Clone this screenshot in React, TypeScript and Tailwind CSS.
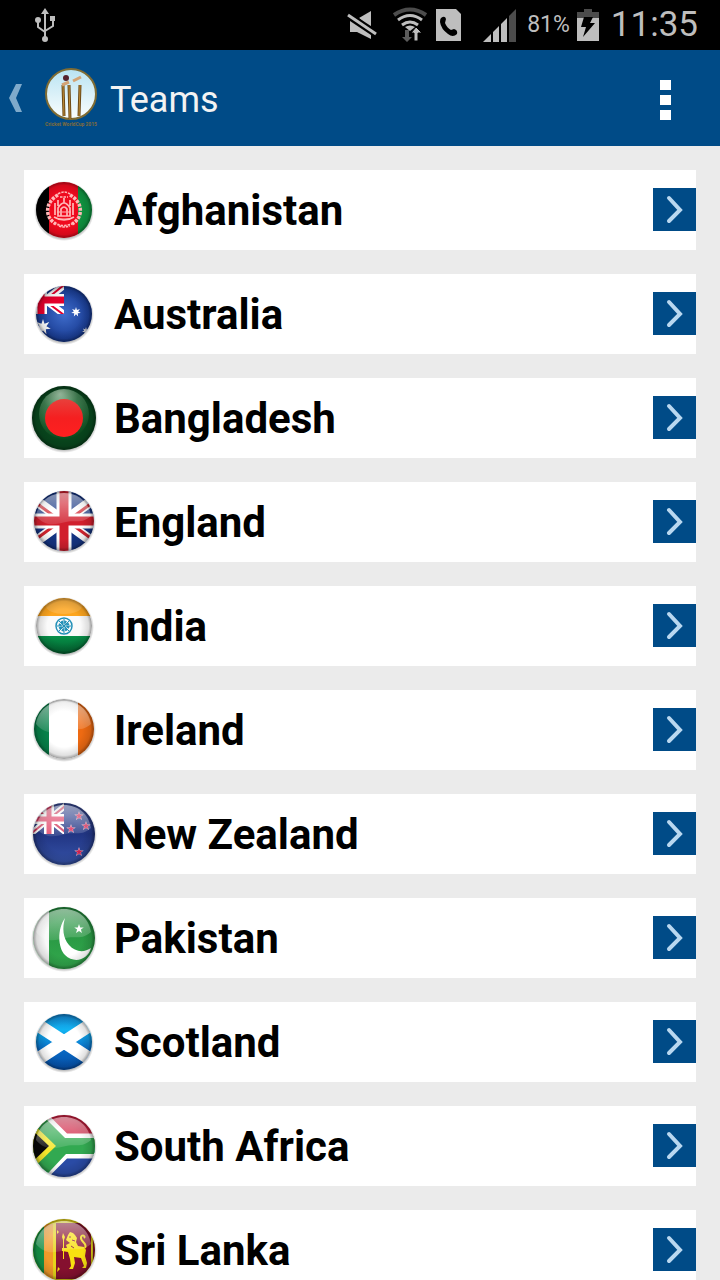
import type { ReactNode } from "react";

const STAR_7 = "0,-10 1.9,-4 7.8,-6.2 4.3,-1 9.7,2.2 3.5,2.7 4.3,9 0,4.4 -4.3,9 -3.5,2.7 -9.7,2.2 -4.3,-1 -7.8,-6.2 -1.9,-4";
const STAR_5 = "0,-10 2.4,-3.2 9.5,-3.1 3.8,1.2 5.9,8.1 0,4 -5.9,8.1 -3.8,1.2 -9.5,-3.1 -2.4,-3.2";

function Star({ x, y, r, points = STAR_5, fill = "#fff" }: { x: number; y: number; r: number; points?: string; fill?: string }) {
  return <polygon points={points} fill={fill} transform={`translate(${x} ${y}) scale(${r / 10})`} />;
}

/** Round glass badge: clips the flag to a circle, then adds rim shade and gloss. */
function FlagBadge({ id, cy = 40, r, gloss, children }: { id: string; cy?: number; r: number; gloss?: boolean; children: ReactNode }) {
  return (
    <svg viewBox="0 0 80 80" className="size-20 shrink-0" aria-hidden="true">
      <defs>
        <clipPath id={`${id}-clip`}>
          <circle cx="40" cy={cy} r={r} />
        </clipPath>
        <radialGradient id={`${id}-shade`}>
          <stop offset="0.6" stopColor="#000" stopOpacity="0" />
          <stop offset="0.88" stopColor="#000" stopOpacity="0.12" />
          <stop offset="1" stopColor="#000" stopOpacity="0.4" />
        </radialGradient>
        <linearGradient id={`${id}-gloss`} x1="0" y1="0" x2="0" y2="1">
          <stop offset="0" stopColor="#fff" stopOpacity="0.5" />
          <stop offset="1" stopColor="#fff" stopOpacity="0.12" />
        </linearGradient>
        <radialGradient id={`${id}-drop`}>
          <stop offset="0.88" stopColor="#000" stopOpacity="0.35" />
          <stop offset="1" stopColor="#000" stopOpacity="0" />
        </radialGradient>
      </defs>
      <circle cx="40" cy={cy + 1} r={r + 2} fill={`url(#${id}-drop)`} />
      <g clipPath={`url(#${id}-clip)`}>
        {children}
        <circle cx="40" cy={cy} r={r} fill={`url(#${id}-shade)`} />
        {gloss && <path d="M12 34 C14 20 26 11 40 11 C54 11 65 20 67 34 C58 42 52 38 42 40 C32 42 22 46 12 34Z" fill={`url(#${id}-gloss)`} />}
      </g>
    </svg>
  );
}

function Afghanistan() {
  return (
    <FlagBadge id="af" r={28}>
      <rect width="25" height="80" fill="#000" />
      <rect x="25" width="30" height="80" fill="#f00a1e" />
      <rect x="54" width="26" height="80" fill="#0f9440" />
      <g fill="none" stroke="#ffb9b8">
        <path d="M34 25 C20 33 21 48 32 54 M46 25 C60 33 59 48 48 54" strokeWidth="3.5" strokeDasharray="3 1.2" />
        <path d="M34 24 Q40 20 46 24 M36 27 H44 M35 56 Q40 58 46 56 M30 53 Q40 58 50 53" strokeWidth="1.6" strokeDasharray="2.5 1" />
        <path d="M31 33 V45 M34 30 V36 M46 30 V36 M49 33 V45 M34 38 Q40 28 46 38 V46 H34Z M37 46 V39 Q40 35 43 39 V46 M40 28 V33 M30 47 Q40 53 50 47" strokeWidth="1.7" />
        <path d="M33 42 H36 M44 42 H47 M38 42 H42 M34 49 H46" strokeWidth="1.2" />
      </g>
    </FlagBadge>
  );
}

function Australia() {
  return (
    <FlagBadge id="au" r={28}>
      <defs>
        <radialGradient id="au-blue" cx="0.5" cy="0.5" r="0.42">
          <stop offset="0" stopColor="#3f6dcc" />
          <stop offset="1" stopColor="#0d2c80" />
        </radialGradient>
        <clipPath id="au-canton">
          <rect y="10" width="40" height="30" />
        </clipPath>
      </defs>
      <rect width="80" height="80" fill="url(#au-blue)" />
      <g clipPath="url(#au-canton)" fill="none">
        <path d="M-6 48 L44 8 M-2 8 L42 42" stroke="#fff" strokeWidth="7" />
        <path d="M20 27 L40 11 M20 26 L40 41" stroke="#e4002b" strokeWidth="2" />
        <path d="M17 10 V40 M0 26 H40" stroke="#fff" strokeWidth="12" />
        <path d="M17 10 V40 M0 26 H40" stroke="#e4002b" strokeWidth="7" />
      </g>
      <Star x={19} y={53} r={8} points={STAR_7} />
      <Star x={52} y={38} r={5} points={STAR_7} />
      <Star x={62} y={57} r={4} points={STAR_7} />
    </FlagBadge>
  );
}

function Bangladesh() {
  return (
    <FlagBadge id="bd" r={32}>
      <defs>
        <linearGradient id="bd-red" x1="0" y1="0" x2="0" y2="1">
          <stop offset="0" stopColor="#e8403c" />
          <stop offset="0.5" stopColor="#f51f20" />
          <stop offset="1" stopColor="#ff2020" />
        </linearGradient>
        <radialGradient id="bd-glass" cx="0.42" cy="0.1" r="0.9">
          <stop offset="0" stopColor="#9cc0a2" />
          <stop offset="0.4" stopColor="#3f7d50" />
          <stop offset="1" stopColor="#0a4a1c" />
        </radialGradient>
      </defs>
      <rect width="80" height="80" fill="#08471d" />
      <ellipse cx="40" cy="36" rx="25" ry="25" fill="url(#bd-glass)" />
      <circle cx="40" cy="40" r="19" fill="url(#bd-red)" />
    </FlagBadge>
  );
}

function England() {
  return (
    <FlagBadge id="en" cy={39} r={30} gloss>
      <rect width="80" height="80" fill="#143483" />
      <path d="M0 10 L80 68 M0 68 L80 10" stroke="#fff" strokeWidth="10" />
      <path d="M0 12 L38 40 M42 38 L80 66 M0 66 L38 38 M42 40 L80 12" stroke="#d3252f" strokeWidth="3" />
      <path d="M40 0 V80 M0 39 H80" stroke="#fff" strokeWidth="15" />
      <path d="M40 0 V80 M0 39 H80" stroke="#d11f2d" strokeWidth="9" />
    </FlagBadge>
  );
}

function India() {
  return (
    <FlagBadge id="in" r={28}>
      <defs>
        <linearGradient id="in-green" x1="0" y1="0" x2="0" y2="1">
          <stop offset="0" stopColor="#069048" />
          <stop offset="0.6" stopColor="#03602f" />
        </linearGradient>
      </defs>
      <rect width="80" height="31" fill="#fda51e" />
      <rect y="30" width="80" height="20" fill="#fafafa" />
      <rect y="50" width="80" height="30" fill="url(#in-green)" />
      <ellipse cx="40" cy="20" rx="18" ry="8" fill="#fff" opacity="0.15" />
      <g fill="none" stroke="#2390b8">
        <circle cx="40" cy="40" r="8" strokeWidth="1.5" />
        <circle cx="40" cy="40" r="4" strokeWidth="3" strokeDasharray="2 1.1" />
        <path d="M40 33 V47 M33 40 H47 M35 35 L45 45 M45 35 L35 45" strokeWidth="1" />
      </g>
    </FlagBadge>
  );
}

function Ireland() {
  return (
    <FlagBadge id="ie" cy={39} r={30} gloss>
      <rect width="26" height="80" fill="#078149" />
      <rect x="25" width="30" height="80" fill="#fff" />
      <rect x="54" width="26" height="80" fill="#ee6a12" />
    </FlagBadge>
  );
}

function NewZealand() {
  return (
    <FlagBadge id="nz" r={31} gloss>
      <defs>
        <linearGradient id="nz-blue" x1="0" y1="0" x2="0" y2="1">
          <stop offset="0" stopColor="#43549c" />
          <stop offset="0.5" stopColor="#213583" />
          <stop offset="1" stopColor="#3c5cb4" />
        </linearGradient>
        <clipPath id="nz-canton">
          <rect y="8" width="40" height="32" />
        </clipPath>
      </defs>
      <rect width="80" height="80" fill="url(#nz-blue)" />
      <g clipPath="url(#nz-canton)">
        <path d="M4 8 L46 42 M4 42 L46 8" stroke="#fff" strokeWidth="6" />
        <path d="M4 8 L46 42 M4 42 L46 8" stroke="#d33a5c" strokeWidth="2" />
        <path d="M25 8 V40 M0 25 H40" stroke="#fff" strokeWidth="10" />
        <path d="M25 8 V40 M0 25 H40" stroke="#e2466a" strokeWidth="5" />
      </g>
      {[
        [47, 35],
        [62, 32],
        [55, 22],
        [55, 58],
      ].map(([x, y]) => (
        <g key={`${x}-${y}`}>
          <Star x={x} y={y} r={5} fill="#e8cfe0" />
          <Star x={x} y={y} r={4} fill="#dc2456" />
        </g>
      ))}
    </FlagBadge>
  );
}

function Pakistan() {
  return (
    <FlagBadge id="pk" r={31} gloss>
      <defs>
        <linearGradient id="pk-green" x1="0" y1="0" x2="0" y2="1">
          <stop offset="0" stopColor="#20883b" />
          <stop offset="1" stopColor="#35ad4f" />
        </linearGradient>
      </defs>
      <rect width="80" height="80" fill="url(#pk-green)" />
      <rect width="25" height="80" fill="#f8f8f8" />
      <path d="M41 20 C33 31 34 50 41 57 C50 66 64 62 67 50 C60 55 51 54 45 47 C39 40 38 30 41 20Z" fill="#fff" />
      <Star x={55} y={31} r={5} />
    </FlagBadge>
  );
}

function Scotland() {
  return (
    <FlagBadge id="sc" r={28}>
      <defs>
        <linearGradient id="sc-blue" x1="0" y1="0" x2="0" y2="1">
          <stop offset="0.15" stopColor="#1180cc" />
          <stop offset="0.35" stopColor="#12b4f2" />
          <stop offset="0.6" stopColor="#0869c4" />
          <stop offset="1" stopColor="#043c93" />
        </linearGradient>
      </defs>
      <rect width="80" height="80" fill="url(#sc-blue)" />
      <path d="M0 14 L80 66 M0 66 L80 14" stroke="#fff" strokeWidth="13" />
    </FlagBadge>
  );
}

function SouthAfrica() {
  return (
    <FlagBadge id="za" r={31} gloss>
      <rect width="80" height="40" fill="#cf1f40" />
      <rect y="40" width="80" height="40" fill="#2a4ba5" />
      <path d="M12 0 L42 30 H90 V50 H42 L12 80" fill="#32a951" stroke="#fff" strokeWidth="5" />
      <path d="M0 0 H9 L41 32 H80 V48 H42 L12 80 H0Z" fill="#32a951" />
      <path d="M0 9 L32 40 L0 71Z" fill="#f5e72c" />
      <path d="M0 16 L25 40 L0 64Z" fill="#080808" />
    </FlagBadge>
  );
}

function SriLanka() {
  return (
    <FlagBadge id="lk" r={31} gloss>
      <rect width="80" height="80" fill="#e6d51a" />
      <rect y="14" width="20" height="56" fill="#159447" />
      <rect x="20" y="14" width="9" height="56" fill="#f19a2a" />
      <rect x="32" y="13" width="35" height="56" fill="#85102f" />
      <rect x="69" y="13" width="11" height="56" fill="#85102f" />
      <g fill="#f8df10">
        <path d="M44 25 L46 22 L49 23 L51 25 L53 28 L52 32 L54 36 L60 37 L62 40 L61 46 L63 53 L62 58 L58 58 L60 56 L57 48 L50 47 L51 53 L49 59 L45 59 L47 56 L46 49 L44 42 L38 41 V38 L43 38 L42 35 L46 33 L42 30Z" />
        <path d="M39 23 L41 27 L40 30 V49 H39 V30 L38 27Z" />
      </g>
      <path d="M61 38 C64 33 56 32 57 27 C58 24 62 26 60 28" fill="none" stroke="#f8df10" strokeWidth="2" />
      <path d="M33 20 l2 2 -2 2Z M33 62 l3 -3 -2 -2Z" fill="#f8df10" />
      <path d="M45 27 h2 M48 30 l3 1 M47 36 l3 2" stroke="#85102f" strokeWidth="1" />
    </FlagBadge>
  );
}

const TEAMS = [
  { name: "Afghanistan", Flag: Afghanistan },
  { name: "Australia", Flag: Australia },
  { name: "Bangladesh", Flag: Bangladesh },
  { name: "England", Flag: England },
  { name: "India", Flag: India },
  { name: "Ireland", Flag: Ireland },
  { name: "New Zealand", Flag: NewZealand },
  { name: "Pakistan", Flag: Pakistan },
  { name: "Scotland", Flag: Scotland },
  { name: "South Africa", Flag: SouthAfrica },
  { name: "Sri Lanka", Flag: SriLanka },
];

function StatusBar() {
  return (
    <div className="flex h-[50px] shrink-0 items-center justify-between bg-black pr-[22px] pl-[35px] text-[#bebebe]">
      <svg viewBox="0 0 21 34" className="h-[34px] w-[21px]" fill="none" stroke="currentColor" strokeWidth="2" aria-hidden="true">
        <path d="M10 4 V30 M3 13 V19 L10 24 M18 11 V18 L10 23" />
        <path d="M10 0 L14 6 H6Z M15 8 H20 V13 H15Z" fill="currentColor" stroke="none" />
        <circle cx="3" cy="12" r="3" fill="currentColor" stroke="none" />
        <circle cx="10" cy="31" r="3" fill="currentColor" stroke="none" />
      </svg>

      <div className="flex items-center">
        <svg viewBox="0 0 30 34" className="mr-[15px] h-[34px] w-[30px]" aria-hidden="true">
          <path d="M12 10 L24 3 V20Z" fill="currentColor" />
          <path d="M3 13 L24 27 V31 L10 24 H3Z" fill="currentColor" />
          <path d="M0 6 L29 25" stroke="#000" strokeWidth="6" />
          <path d="M1 7 L29 26" stroke="currentColor" strokeWidth="3" />
        </svg>
        <svg viewBox="0 0 36 36" className="mr-2 h-9 w-9" fill="none" strokeWidth="3" aria-hidden="true">
          <path d="M2 8 Q18 -3 34 8" stroke="#4c4c4c" strokeWidth="4" />
          <path d="M6 13 Q18 4 30 13 M10 18 Q18 12 26 18" stroke="currentColor" />
          <path d="M13 20 Q18 17 23 20 L18 24Z" fill="currentColor" />
          <path d="M13 23 H17 V30 H20 L15 35 L10 30 H13Z" fill="#5c5c5c" />
          <path d="M24 20 L30 26 H26 V34 H22 V26 H19Z" fill="currentColor" stroke="#000" strokeWidth="1" />
        </svg>
        <svg viewBox="0 0 25 32" className="mr-[22px] h-8 w-[25px]" aria-hidden="true">
          <path d="M0 0 H20 L25 5 V32 H0Z" fill="currentColor" />
          <path d="M5 9 Q9 6 10 10 L9 14 Q11 19 15 21 L18 20 Q22 21 21 25 Q17 29 12 25 Q5 20 4 13 Q4 10 5 9Z" fill="#000" />
        </svg>
        <svg viewBox="0 0 34 34" className="mr-[10px] h-[34px] w-[34px]" fill="currentColor" aria-hidden="true">
          <path d="M0 34 L8 26 V34Z M10 24 L16 18 V34 H10Z M18 16 L24 10 V34 H18Z" />
          <path d="M26 8 L33 1 V34 H26Z" fill="#4c4c4c" />
        </svg>
        <span className="mr-[7px] text-[23px] leading-8">81%</span>
        <svg viewBox="0 0 22 32" className="mr-3 h-8 w-[22px]" aria-hidden="true">
          <path d="M7 0 H15 V3 H22 V9 H0 V3 H7Z" fill="#4c4c4c" />
          <path d="M0 9 H22 V32 H0Z" fill="currentColor" />
          <path d="M7 8 H16 L13 14 H18 L6 28 L9 18 H4Z" fill="#000" />
        </svg>
        <span className="text-[35px] leading-10">11:35</span>
      </div>
    </div>
  );
}

function AppLogo() {
  return (
    <svg viewBox="0 0 56 62" className="h-[62px] w-14" aria-hidden="true">
      <defs>
        <linearGradient id="logo-sky" x1="0" y1="0" x2="0" y2="1">
          <stop offset="0" stopColor="#b9e3f2" />
          <stop offset="1" stopColor="#fbfefe" />
        </linearGradient>
      </defs>
      <circle cx="28" cy="27" r="25" fill="url(#logo-sky)" stroke="#7f6c34" strokeWidth="2" />
      <path d="M20 18 L21 49 M26 18 L27 52 M37 18 L36 49" stroke="#6d4a16" strokeWidth="3" />
      <path d="M20 18 L21 49 M26 18 L27 52 M37 18 L36 49" stroke="#bd8a36" strokeWidth="1" />
      <path d="M19 18 L26 15 M30 14 L38 10" stroke="#d3a374" strokeWidth="3" />
      <circle cx="23" cy="11" r="3" fill="#54202c" />
      <text x="28" y="59" textAnchor="middle" fontSize="5" fontWeight="bold" fill="#806b3b">
        Cricket WorldCup 2015
      </text>
    </svg>
  );
}

function ActionBar() {
  return (
    <header className="flex h-24 shrink-0 items-center bg-[#004b87] pr-10 pl-2 text-[#f3f3f3]">
      <button type="button" aria-label="Back" className="mr-5 text-[#7faacb]">
        <svg viewBox="0 0 15 28" className="h-7 w-[15px]" aria-hidden="true">
          <path d="M8 0 H14 L8 14 L14 28 H8 L1 14Z" fill="currentColor" />
        </svg>
      </button>
      <AppLogo />
      <h1 className="ml-[11px] flex-1 pt-1 text-[36px] leading-10">Teams</h1>
      <button type="button" aria-label="More options" className="flex w-[30px] flex-col items-center gap-[5px] pt-1">
        <span className="h-[10px] w-[11px] bg-white" />
        <span className="h-[10px] w-[11px] bg-white" />
        <span className="h-[10px] w-[11px] bg-white" />
      </button>
    </header>
  );
}

export default function App() {
  return (
    <div className="flex h-screen flex-col bg-[#ebebeb] font-[Roboto,sans-serif]">
      <StatusBar />
      <ActionBar />
      <main className="min-h-0 flex-1 overflow-y-auto p-6 [scrollbar-width:none]">
        <ul className="flex flex-col gap-6">
          {TEAMS.map(({ name, Flag }) => (
            <li key={name}>
              <button type="button" className="flex h-20 w-full items-center bg-white text-left">
                <Flag />
                <span className="ml-[10px] flex-1 pt-[2px] text-[42px] leading-[48px] font-bold text-black">{name}</span>
                <span className="mb-[2px] flex size-[43px] items-center justify-center bg-[#004b87]">
                  <svg viewBox="0 0 43 43" className="size-[43px]" fill="none" aria-hidden="true">
                    <path d="M16 10 L27 22 L16 33" stroke="#b9d8f0" strokeWidth="4" strokeLinecap="round" />
                  </svg>
                </span>
              </button>
            </li>
          ))}
        </ul>
      </main>
    </div>
  );
}
